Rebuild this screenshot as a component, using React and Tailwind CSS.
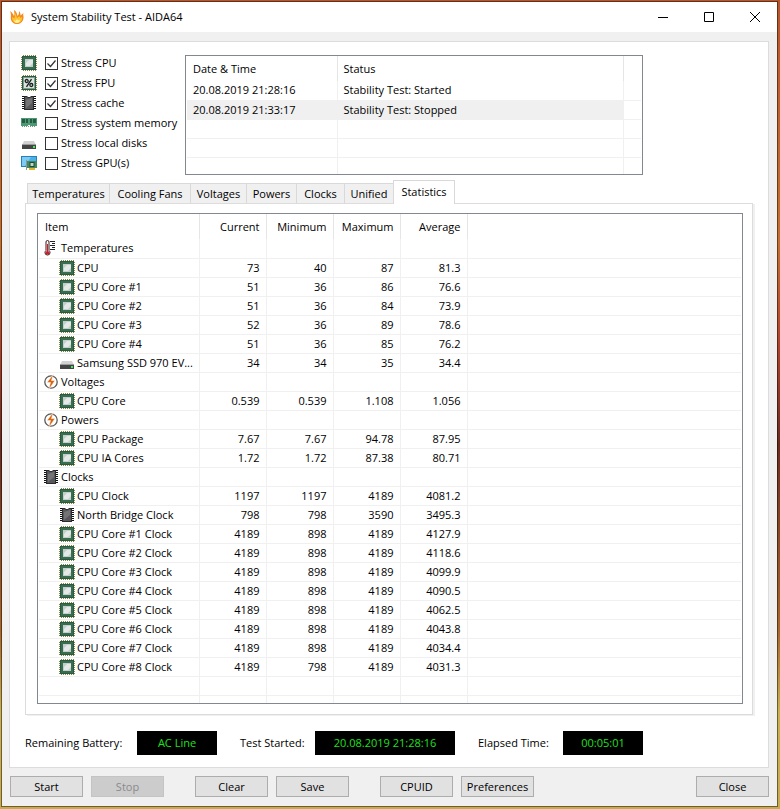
import React, { useState } from 'react'
import clsx from 'clsx'

const stressTests = [
  { id: 'cpu', label: 'Stress CPU', icon: 'cpu', on: true },
  { id: 'fpu', label: 'Stress FPU', icon: 'fpu', on: true },
  { id: 'cache', label: 'Stress cache', icon: 'chip', on: true },
  { id: 'memory', label: 'Stress system memory', icon: 'memory', on: false },
  { id: 'disks', label: 'Stress local disks', icon: 'disk', on: false },
  { id: 'gpu', label: 'Stress GPU(s)', icon: 'gpu', on: false },
]

const logRows = [
  ['20.08.2019 21:28:16', 'Stability Test: Started'],
  ['20.08.2019 21:33:17', 'Stability Test: Stopped'],
  ['', ''],
  ['', ''],
]

const tabs = [
  { name: 'Temperatures', width: 'w-[83px]' },
  { name: 'Cooling Fans', width: 'w-[82px]' },
  { name: 'Voltages', width: 'w-[57px]' },
  { name: 'Powers', width: 'w-[51px]' },
  { name: 'Clocks', width: 'w-[49px]' },
  { name: 'Unified', width: 'w-[50px]' },
  { name: 'Statistics', width: 'w-[62px]' },
]

const stats = [
  { group: 'Temperatures', icon: 'thermo' },
  { name: 'CPU', icon: 'cpu', values: ['73', '40', '87', '81.3'] },
  { name: 'CPU Core #1', icon: 'cpu', values: ['51', '36', '86', '76.6'] },
  { name: 'CPU Core #2', icon: 'cpu', values: ['51', '36', '84', '73.9'] },
  { name: 'CPU Core #3', icon: 'cpu', values: ['52', '36', '89', '78.6'] },
  { name: 'CPU Core #4', icon: 'cpu', values: ['51', '36', '85', '76.2'] },
  { name: 'Samsung SSD 970 EV...', icon: 'disk', values: ['34', '34', '35', '34.4'] },
  { group: 'Voltages', icon: 'bolt' },
  { name: 'CPU Core', icon: 'cpu', values: ['0.539', '0.539', '1.108', '1.056'] },
  { group: 'Powers', icon: 'bolt' },
  { name: 'CPU Package', icon: 'cpu', values: ['7.67', '7.67', '94.78', '87.95'] },
  { name: 'CPU IA Cores', icon: 'cpu', values: ['1.72', '1.72', '87.38', '80.71'] },
  { group: 'Clocks', icon: 'chip' },
  { name: 'CPU Clock', icon: 'cpu', values: ['1197', '1197', '4189', '4081.2'] },
  { name: 'North Bridge Clock', icon: 'chip', values: ['798', '798', '3590', '3495.3'] },
  { name: 'CPU Core #1 Clock', icon: 'cpu', values: ['4189', '898', '4189', '4127.9'] },
  { name: 'CPU Core #2 Clock', icon: 'cpu', values: ['4189', '898', '4189', '4118.6'] },
  { name: 'CPU Core #3 Clock', icon: 'cpu', values: ['4189', '898', '4189', '4099.9'] },
  { name: 'CPU Core #4 Clock', icon: 'cpu', values: ['4189', '898', '4189', '4090.5'] },
  { name: 'CPU Core #5 Clock', icon: 'cpu', values: ['4189', '898', '4189', '4062.5'] },
  { name: 'CPU Core #6 Clock', icon: 'cpu', values: ['4189', '898', '4189', '4043.8'] },
  { name: 'CPU Core #7 Clock', icon: 'cpu', values: ['4189', '898', '4189', '4034.4'] },
  { name: 'CPU Core #8 Clock', icon: 'cpu', values: ['4189', '798', '4189', '4031.3'] },
  { name: '', values: ['', '', '', ''] },
]

const Flame = () => (
  <svg width="14" height="16" viewBox="0 0 14 16">
    <path d="M0 2c2 1 3 3 4 5 1-2 0-4 0-6 2 1 3 3 3.500 6C9 6 9 4 9 2c1.500 1.500 1.500 3 1.500 4.500L13.500 4c-1 2 .5 3 0 5-.5 4-3.500 6-6.500 6s-6-2-6.200-5.500C.7 7 1.500 5 0 2z" fill="#f58a1f" />
    <path d="M2 8l2.500 1.500C5 8 4.800 6 5 4c1.200 2 1.500 3.500 2 5l2.500-2c0 1 .5 1.500 1 2l1.500-1c.3 4-2 6-5 6s-5-2.500-5-6z" fill="#fdc62f" />
    <path d="M4 11l1.500 1L7 10l1 1.500 2-1c0 2-1.500 3.500-3 3.500s-3-1-3-3z" fill="#fff0a0" />
  </svg>
)

const CpuBase = ({ children }) => (
  <>
    <path d="M2 .5h13M2 15.500h13M.5 2v13M15.500 2v13" stroke="#85873a" strokeDasharray="1 1" />
    <rect x="1" y="1" width="14" height="14" fill="#2a5a42" />
    {children}
  </>
)

const Icon = ({ type }) => (
  <svg width="16" height="16" viewBox="0 0 16 16" className="shrink-0" aria-hidden="true">
    {type === 'cpu' && (
      <CpuBase>
        <rect x="2" y="2" width="12" height="12" fill="#396d50" />
        <rect x="4" y="4" width="8" height="8" fill="#c3cdc9" />
        <path d="M5 11V8l3-3h4v3l-3 3z" fill="#e4e9e7" />
      </CpuBase>
    )}
    {type === 'fpu' && (
      <CpuBase>
        <rect x="2" y="2" width="12" height="12" fill="#7c9d8b" />
        <rect x="3" y="3" width="10" height="10" fill="#dde3df" />
        <g fill="none" stroke="#16211b" strokeWidth="1.3">
          <circle cx="5.7" cy="6" r="1.5" />
          <circle cx="10.3" cy="10" r="1.5" />
          <path d="M10.5 4.2l-5 7.6" />
        </g>
      </CpuBase>
    )}
    {type === 'chip' && (
      <>
        <path d="M2.500 1v14M13.500 1v14" stroke="#111" strokeWidth="3" strokeDasharray="1 1" />
        <path d="M3 1h3l1 1h2l1-1h3v14H3z" fill="#2c2c2e" />
        <path d="M4 2h2l1 1h2l1-1h2v12H4z" fill="#58585b" />
        <path d="M5 5l6-2v5l-6 5z" fill="#747477" />
      </>
    )}
    {type === 'memory' && (
      <>
        <path d="M0 3h16v8H9v-1H7v1H0z" fill="#4c9a74" />
        <path d="M1 4h3v4H1zM5 4h2v4H5zM9 4h2v4H9zM12 4h3v4h-3z" fill="#285a43" />
        <path d="M1 11.500h14" stroke="#7d9586" strokeDasharray="1 1" />
      </>
    )}
    {type === 'disk' && (
      <>
        <path d="M3 6h10l2 4H1z" fill="#d2d2d2" />
        <path d="M1 9h14v5H1z" fill="#434545" />
        <path d="M1 9h14v1H1z" fill="#9c9e9e" />
        <path d="M12 11h2v2h-2z" fill="#3fe85a" />
      </>
    )}
    {type === 'gpu' && (
      <>
        <rect x="0" y="1" width="16" height="11" fill="#2a7fb8" />
        <path d="M1 2h14v9H1z" fill="#4cb0e8" />
        <path d="M1 2h9l-6 9H1z" fill="#7bcbf5" />
        <rect x="6" y="6" width="10" height="7" fill="#3f8a5e" />
        <rect x="9" y="7.500" width="4" height="4" fill="#c5d3cb" stroke="#234c37" />
        <path d="M5.500 5v10" stroke="#8c9499" />
        <path d="M8 14h6" stroke="#e0b429" strokeWidth="2" />
      </>
    )}
    {type === 'thermo' && (
      <>
        <path d="M3 2q0-1.500 1.500-1.500T6 2v8.500q1 .8 1 2.200 0 2.300-2.500 2.300T2 12.700q0-1.400 1-2.200z" fill="#fff" stroke="#3a1417" />
        <path d="M4 4h1v7l1.500 1v1.500l-1 1h-2l-1-1V12L4 11z" fill="#c8202c" />
        <path d="M7 1.500h5M9 3.500h3M7 5.500h5M9 7.500h3M7 9.500h5" stroke="#222" />
      </>
    )}
    {type === 'bolt' && (
      <>
        <circle cx="8" cy="8" r="6.200" fill="#fff" stroke="#5a5a5a" strokeWidth="1.300" />
        <path d="M10.500 0L4 8.500h3.500L5.500 16 12 6.500H8.500z" fill="#d9660f" stroke="#fff" strokeWidth="0.500" />
      </>
    )}
  </svg>
)

const TitleBar = () => (
  <header className="flex h-[30px] shrink-0 items-center bg-white pl-2">
    <Flame />
    <h1 className="ml-[7px] flex-1">System Stability Test - AIDA64</h1>
    <button aria-label="Minimize" className="flex h-full w-11 items-center justify-center">
      <svg width="10" height="10" stroke="#000"><path d="M0 5.500h10" /></svg>
    </button>
    <button aria-label="Maximize" className="flex h-full w-12 items-center justify-center">
      <svg width="10" height="10" stroke="#000" fill="none"><path d="M.5.5h9v9h-9z" /></svg>
    </button>
    <button aria-label="Close window" className="flex h-full w-11 items-center justify-center">
      <svg width="10" height="10" stroke="#000"><path d="M0 0l10 10M10 0L0 10" /></svg>
    </button>
  </header>
)

const StressList = () => {
  const [checked, setChecked] = useState(() => stressTests.filter((t) => t.on).map((t) => t.id))

  const toggle = (id) =>
    setChecked((prev) => (prev.includes(id) ? prev.filter((x) => x !== id) : [...prev, id]))

  return (
    <div className="w-[164px] shrink-0 whitespace-nowrap">
      {stressTests.map((t) => (
        <div key={t.id} className="flex h-5 items-center">
          <Icon type={t.icon} />
          <label className="ml-2 flex items-center gap-[3px]">
            <span className="grid">
              <input
                type="checkbox"
                checked={checked.includes(t.id)}
                onChange={() => toggle(t.id)}
                className="col-start-1 row-start-1 size-[13px] appearance-none border border-[#333] bg-white"
              />
              {checked.includes(t.id) && (
                <svg width="13" height="13" fill="none" stroke="#333" className="pointer-events-none col-start-1 row-start-1">
                  <path d="M2.500 6.500l3 3 5-6" strokeWidth="1.200" />
                </svg>
              )}
            </span>
            {t.label}
          </label>
        </div>
      ))}
    </div>
  )
}

const LogTable = () => (
  <div className="mt-0.5 h-[120px] w-[458px] overflow-hidden border border-[#828790] bg-white px-px">
    <table className="w-full table-fixed border-collapse text-left">
      <colgroup>
        <col className="w-[150px]" />
        <col className="w-[286px]" />
        <col />
      </colgroup>
      <thead>
        <tr className="h-[25px]">
          <th className="border-r border-[#e5e5e5] pl-1.5 font-normal">Date &amp; Time</th>
          <th className="border-r border-[#e5e5e5] pl-1.5 font-normal">Status</th>
          <td />
        </tr>
      </thead>
      <tbody>
        {logRows.map(([time, status], i) => (
          <tr key={i} className="h-[19px] border-b border-[#f0f0f0]">
            <td className={clsx('border-r border-[#f0f0f0] pl-1.5', i === 1 && 'bg-[#f0f0f0]')}>{time}</td>
            <td className={clsx('border-r border-[#f0f0f0] pl-1.5', i === 1 && 'bg-[#f0f0f0]')}>{status}</td>
            <td />
          </tr>
        ))}
        <tr className="h-[19px]">
          <td className="border-r border-[#f0f0f0]" />
          <td className="border-r border-[#f0f0f0]" />
          <td />
        </tr>
      </tbody>
    </table>
  </div>
)

const StatsTable = () => (
  <div className="h-[491px] overflow-hidden border border-[#828790] bg-white px-px">
    <table className="w-full table-fixed border-collapse whitespace-nowrap">
      <colgroup>
        <col className="w-[160px]" />
        <col className="w-[67px]" />
        <col className="w-[67px]" />
        <col className="w-[67px]" />
        <col className="w-[67px]" />
        <col />
      </colgroup>
      <thead>
        <tr className="h-[25px] text-right">
          <th className="border-r border-[#e5e5e5] pl-1.5 text-left font-normal">Item</th>
          {['Current', 'Minimum', 'Maximum', 'Average'].map((h) => (
            <th key={h} className="border-r border-[#e5e5e5] pr-1.5 font-normal">{h}</th>
          ))}
          <td />
        </tr>
      </thead>
      <tbody>
        {stats.map((row, i) => (
          <tr key={i} className="h-[19px] border-b border-[#f0f0f0] text-right">
            <td className="border-r border-[#f0f0f0] text-left">
              <div className={clsx('flex h-[18px] items-center gap-0.5', row.group ? 'pl-1' : 'pl-5')}>
                {row.icon && <Icon type={row.icon} />}
                {row.group || row.name}
              </div>
            </td>
            {(row.values || ['', '', '', '']).map((v, j) => (
              <td key={j} className="border-r border-[#f0f0f0] pr-1.5">{v}</td>
            ))}
            <td />
          </tr>
        ))}
        <tr className="h-[19px]">
          {[0, 1, 2, 3, 4].map((n) => <td key={n} className="border-r border-[#f0f0f0]" />)}
          <td />
        </tr>
      </tbody>
    </table>
  </div>
)

const Readout = ({ label, value, labelWidth, width }) => (
  <div className="flex items-center">
    <span className={labelWidth}>{label}</span>
    <output className={clsx('flex h-6 items-center justify-center bg-black text-[#1fe01f]', width)}>{value}</output>
  </div>
)

const PushButton = ({ children, disabled }) => (
  <button
    disabled={disabled}
    className="h-[21px] w-[73px] border border-[#adadad] bg-[#e1e1e1] leading-none disabled:border-[#c4c4c4] disabled:bg-[#cccccc] disabled:text-[#8a8a8a]"
  >
    {children}
  </button>
)

export default function App() {
  const [activeTab, setActiveTab] = useState('Statistics')

  return (
    <div className="flex min-h-screen flex-col bg-[linear-gradient(#b8562c,#c4702e_30%,#b0452c_42%,#6a2c20_55%,#a8682c_78%,#c9b050_88%,#c9ab4f)] pt-px pr-0.5 pb-0.5 pl-px font-['Open_Sans',sans-serif] text-[11px] leading-4 text-black">
      <div className="flex flex-1 flex-col border border-black/45 bg-[#f0f0f0] bg-clip-padding">
        <TitleBar />

        <main className="mt-[9px] mr-2 ml-[7px] border border-[#dcdcdc] bg-white">
          <div className="flex pt-[11px] pl-[11px]">
            <StressList />
            <LogTable />
          </div>

          <div className="mx-[15px] pt-[5px]">
            <div role="tablist" className="relative flex h-[23px] items-end pl-0.5">
              {tabs.map((tab) => (
                <button
                  key={tab.name}
                  role="tab"
                  aria-selected={activeTab === tab.name}
                  onClick={() => setActiveTab(tab.name)}
                  className={clsx(
                    'border border-b-0 border-[#d9d9d9] text-center whitespace-nowrap',
                    tab.width,
                    activeTab === tab.name ? '-mb-px h-6 bg-white pb-0.5' : '-mr-px h-5 bg-[#f0f0f0]'
                  )}
                >
                  {tab.name}
                </button>
              ))}
            </div>
            <div className="border border-[#dcdcdc] bg-white pt-[9px] pr-[9px] pb-2.5 pl-[11px] shadow-[2px_1px_0_#f0f0f0]">
              <StatsTable />
            </div>
          </div>

          <div className="flex gap-[23px] px-[15px] pt-4 pb-3">
            <Readout label="Remaining Battery:" value="AC Line" labelWidth="w-28" width="w-20" />
            <Readout label="Test Started:" value="20.08.2019 21:28:16" labelWidth="w-[75px]" width="w-[140px]" />
            <Readout label="Elapsed Time:" value="00:05:01" labelWidth="w-[85px]" width="w-20" />
          </div>
        </main>

        <footer className="flex gap-[31px] px-2 pt-2 pb-[7px]">
          <div className="flex gap-2">
            <PushButton>Start</PushButton>
            <PushButton disabled>Stop</PushButton>
          </div>
          <div className="flex gap-2">
            <PushButton>Clear</PushButton>
            <PushButton>Save</PushButton>
          </div>
          <div className="flex gap-2">
            <PushButton>CPUID</PushButton>
            <PushButton>Preferences</PushButton>
          </div>
          <div className="ml-auto">
            <PushButton>Close</PushButton>
          </div>
        </footer>
      </div>
    </div>
  )
}
